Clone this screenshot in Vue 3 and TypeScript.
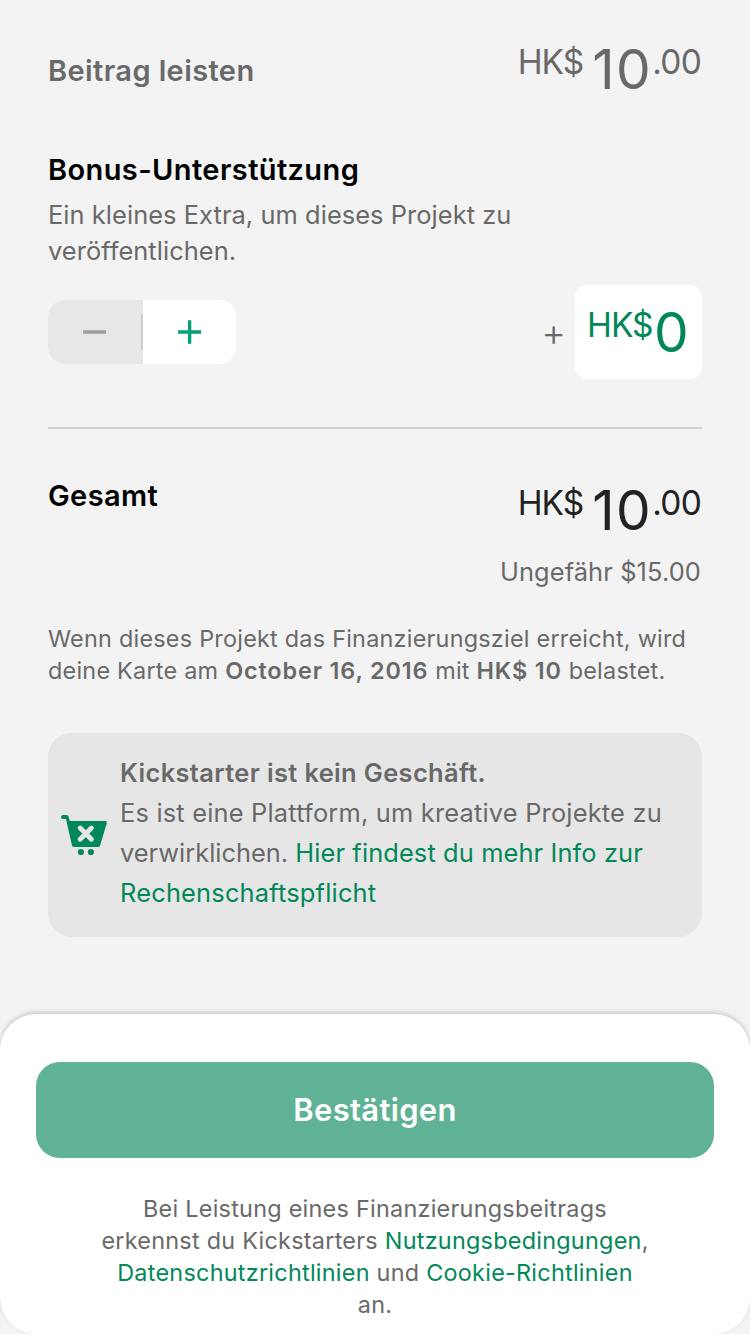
<script setup lang="ts">
interface Money {
  symbol: string
  whole: string
  cents: string
}

const pledge: Money = { symbol: 'HK$', whole: '10', cents: '.00' }
const total: Money = { symbol: 'HK$', whole: '10', cents: '.00' }
const bonus = { symbol: 'HK$', whole: '0' }
</script>

<template>
  <main class="screen">
    <section class="row pledge-row">
      <h2 class="heading muted">Beitrag leisten</h2>
      <div class="money muted">
        <span class="symbol">{{ pledge.symbol }}</span>
        <span class="whole">{{ pledge.whole }}</span>
        <span class="cents">{{ pledge.cents }}</span>
      </div>
    </section>

    <section class="bonus">
      <h2 class="heading bonus-title">Bonus-Unterstützung</h2>
      <p class="bonus-text">
        <span class="line">Ein kleines Extra, um dieses Projekt zu</span>
        <span class="line">veröffentlichen.</span>
      </p>
      <div class="row bonus-controls">
        <div class="stepper">
          <button class="step minus" type="button" aria-label="Weniger">
            <svg width="24" height="24" viewBox="0 0 24 24"><path d="M0.1 12H23.1" /></svg>
          </button>
          <button class="step plus" type="button" aria-label="Mehr">
            <svg width="24" height="24" viewBox="0 0 24 24"><path d="M0.1 12H23.1M11.6 0.2V23.8" /></svg>
          </button>
        </div>
        <div class="bonus-amount">
          <span class="plus-sign">+</span>
          <div class="amount-box">
            <span class="symbol">{{ bonus.symbol }}</span>
            <span class="whole">{{ bonus.whole }}</span>
          </div>
        </div>
      </div>
    </section>

    <hr class="rule" />

    <section class="row total-row">
      <h2 class="heading total-title">Gesamt</h2>
      <div class="money">
        <span class="symbol">{{ total.symbol }}</span>
        <span class="whole">{{ total.whole }}</span>
        <span class="cents">{{ total.cents }}</span>
      </div>
    </section>
    <p class="approx">Ungefähr $15.00</p>

    <p class="charge">
      <span class="line">Wenn dieses Projekt das Finanzierungsziel erreicht, wird</span>
      <span class="line">deine Karte am <b>October 16, 2016</b> mit <b>HK$ 10</b> belastet.</span>
    </p>

    <aside class="notice">
      <svg class="cart" width="48" height="42" viewBox="0 0 48 42">
        <path d="M3 1H6.6Q8.3 1 8.7 2.7L9.7 7H45.4Q47.4 7 46.8 8.9L40.1 31.4Q39.6 33 38 33H13.9Q12.3 33 11.9 31.3L6 5.1H3A2.05 2.05 0 0 1 3 1Z" />
        <path class="cross" d="M20.2 14L31.4 25.2M31.4 14L20.2 25.2" />
        <circle cx="20.9" cy="38" r="3.1" />
        <circle cx="30.9" cy="38" r="3.1" />
      </svg>
      <div class="notice-text">
        <b class="line">Kickstarter ist kein Geschäft.</b>
        <span class="line n2">Es ist eine Plattform, um kreative Projekte zu</span>
        <span class="line n3">verwirklichen. <a>Hier findest du mehr Info zur</a></span>
        <span class="line n4"><a>Rechenschaftspflicht</a></span>
      </div>
    </aside>

    <footer class="sheet">
      <button class="confirm" type="button">Bestätigen</button>
      <p class="legal">
        <span class="line">Bei Leistung eines Finanzierungsbeitrags</span>
        <span class="line">erkennst du Kickstarters <a>Nutzungsbedingungen</a>,</span>
        <span class="line"><a>Datenschutzrichtlinien</a> und <a>Cookie-Richtlinien</a></span>
        <span class="line">an.</span>
      </p>
    </footer>
  </main>
</template>

<style>
body {
  margin: 0;
  background: #f3f3f3;
}
</style>

<style scoped>
.screen {
  box-sizing: border-box;
  width: 750px;
  height: 1334px;
  overflow: hidden;
  display: flex;
  flex-direction: column;
  background: #f3f3f3;
  color: #696969;
  font-family: Inter, "Liberation Sans", sans-serif;
  font-size: 25.4px;
}
h2, p { margin: 0; }
button { border: 0; padding: 0; font-family: inherit; }
a { color: #028858; }
b { font-weight: 600; }
.line { display: block; white-space: nowrap; }
.row {
  display: flex;
  justify-content: space-between;
  align-items: flex-start;
  margin: 0 48px;
}
.heading {
  font-size: 29px;
  line-height: 40px;
  font-weight: 600;
  letter-spacing: 0.4px;
  color: #000;
  white-space: nowrap;
}
.heading.muted, .money.muted { color: #696969; }
.pledge-row { height: 99px; padding-top: 51px; }
.pledge-row .money { margin-top: -9px; }
.money {
  display: flex;
  align-items: flex-start;
  margin-right: 0.6px;
  color: #222;
}
.symbol, .cents { font-size: 33.5px; line-height: 40px; }
.symbol { letter-spacing: -1px; }
.cents { letter-spacing: -0.6px; }
.whole { font-size: 55px; line-height: 54px; }
.money .whole { margin-left: 9px; letter-spacing: 1.4px; }

.bonus-title { margin: 0 48px; }
.bonus-text { margin: 7px 48px 0; line-height: 36px; letter-spacing: 0.07px; }
.bonus-controls { margin-top: 16px; height: 94px; }
.stepper {
  display: flex;
  width: 188px;
  height: 64px;
  margin-top: 15px;
  border-radius: 17px;
  overflow: hidden;
  background: #fff;
}
.step { display: flex; align-items: center; justify-content: center; height: 64px; }
.step svg { fill: none; stroke-width: 3.4; }
.minus {
  position: relative;
  width: 95px;
  padding-right: 2px;
  background: #e7e7e7;
}
.minus::after {
  content: "";
  position: absolute;
  right: 0;
  top: 14px;
  width: 2px;
  height: 36px;
  background: #cdcdcd;
}
.minus svg { stroke: #9b9f9d; }
.plus { width: 93px; background: #fff; }
.plus svg { stroke: #05a077; }
.bonus-amount { display: flex; align-items: center; gap: 9px; }
.plus-sign { font-size: 38px; line-height: 38px; font-weight: 350; }
.amount-box {
  box-sizing: border-box;
  display: flex;
  align-items: flex-start;
  width: 127px;
  height: 94px;
  padding: 20px 0 0 12px;
  border-radius: 12px;
  background: #fff;
  color: #028858;
}
.amount-box .whole { margin-left: 1.3px; }
.rule {
  width: 654px;
  height: 2px;
  margin: 48px 48px 0;
  border: 0;
  background: #d1d1d1;
}
.total-row { margin-top: 47px; height: 79px; }
.total-row .money { margin-top: 7px; }
.approx { margin: -1px 49px 0 48px; line-height: 36px; text-align: right; letter-spacing: 0.12px; }
.charge { margin: 33px 48px 0; font-size: 23.4px; line-height: 32px; letter-spacing: 0.24px; }
.charge b { letter-spacing: 0.87px; }

.notice {
  box-sizing: border-box;
  display: flex;
  height: 204px;
  margin: 46px 48px 0;
  padding: 20px 0 0 12px;
  border-radius: 24px;
  background: #e6e6e6;
}
.cart { margin: 61px 12px 0 0; fill: #028858; flex: none; }
.cross { fill: none; stroke: #e6e6e6; stroke-width: 4.9; stroke-linecap: round; }
.notice-text { line-height: 40px; }
.notice-text b { letter-spacing: 0.38px; }
.n2, .n4 { letter-spacing: 0.2px; }
.n3 a { letter-spacing: 0.12px; }

.sheet {
  flex: none;
  display: flex;
  flex-direction: column;
  align-items: center;
  height: 320px;
  margin-top: 77px;
  border-radius: 36px;
  background: #fff;
  box-shadow: 0 -2px 4px rgba(0, 0, 0, 0.17);
}
.confirm {
  width: 678px;
  height: 96px;
  margin-top: 48px;
  padding-bottom: 2px;
  border-radius: 24px;
  background: #5fb295;
  color: #fff;
  font-size: 31px;
  font-weight: 600;
  letter-spacing: 0.3px;
}
.legal {
  margin-top: 35px;
  font-size: 23.4px;
  line-height: 32px;
  letter-spacing: 0.26px;
  text-align: center;
}
</style>
